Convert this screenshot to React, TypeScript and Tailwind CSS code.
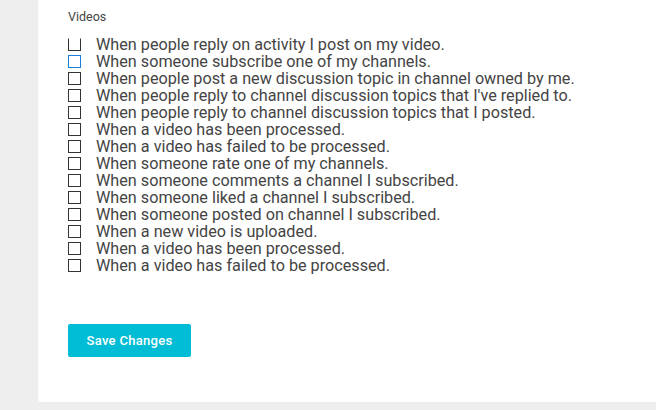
const items = [
  'When people reply on activity I post on my video.',
  'When someone subscribe one of my channels.',
  'When people post a new discussion topic in channel owned by me.',
  "When people reply to channel discussion topics that I've replied to.",
  'When people reply to channel discussion topics that I posted.',
  'When a video has been processed.',
  'When a video has failed to be processed.',
  'When someone rate one of my channels.',
  'When someone comments a channel I subscribed.',
  'When someone liked a channel I subscribed.',
  'When someone posted on channel I subscribed.',
  'When a new video is uploaded.',
  'When a video has been processed.',
  'When a video has failed to be processed.',
];

export default function App() {
  return (
    <div className="h-[410px] w-[656px] overflow-hidden bg-[#eeeeee] font-['Roboto',sans-serif]">
      <div className="ml-[38px] h-[402px] rounded-bl-[3px] bg-white pl-[30px]">
        {/* Videos notifications */}
        <div className="pt-[9px] text-[12.5px] leading-[16px] text-[#444]">Videos</div>
        <ul className="mt-[11px]">
          {items.map((label, i) => (
            <li key={i} className="flex h-[17px] items-center">
              <span
                className={
                  i === 0
                    ? 'h-[13px] w-[13px] shrink-0 border border-[#333] border-t-transparent bg-white'
                    : i === 1
                      ? 'h-[13px] w-[13px] shrink-0 border border-[#1a7fd6] bg-white'
                      : 'h-[13px] w-[13px] shrink-0 border border-[#333] bg-white'
                }
              />
              <span className="ml-[15px] text-[16.2px] leading-[17px] text-[#444]">{label}</span>
            </li>
          ))}
        </ul>
        <button className="mt-[50px] h-[33px] w-[123px] rounded-[2px] bg-[#00bcd4] text-[13px] font-medium tracking-[0.3px] text-white">
          Save Changes
        </button>
      </div>
    </div>
  );
}
